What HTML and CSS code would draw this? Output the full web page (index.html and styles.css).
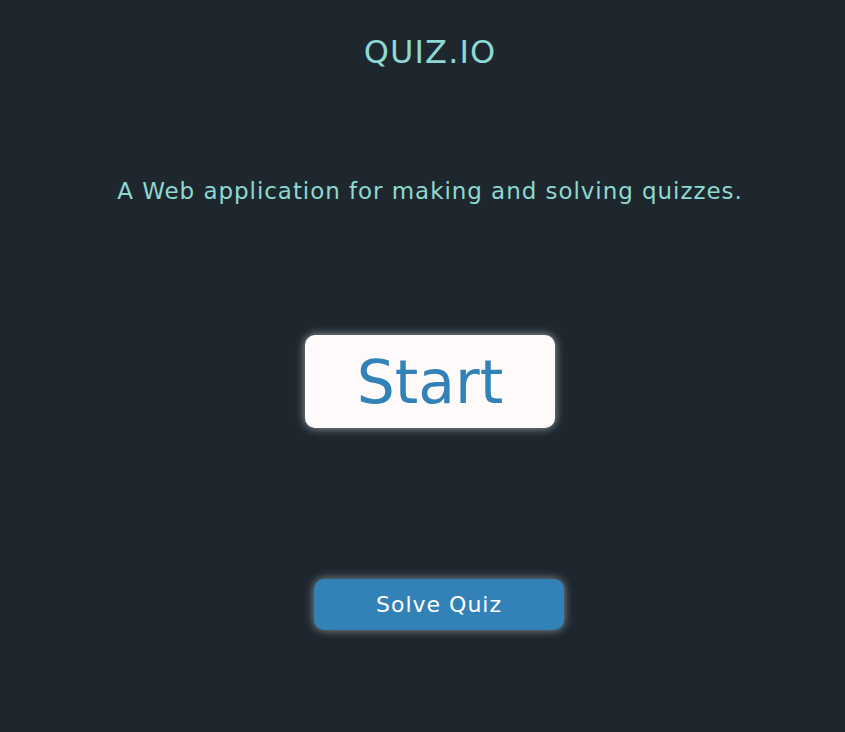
FILE: index.html
```html
<!DOCTYPE html>
<html lang="en">
<head>
<meta charset="utf-8">
<title>QUIZ.IO</title>
<link rel="stylesheet" href="styles.css">
</head>
<body>
<main class="page">
  <h1 class="title">QUIZ.IO</h1>
  <p class="subtitle">A Web application for making and solving quizzes.</p>
  <button class="start">Start</button>
  <button class="solve">Solve Quiz</button>
</main>
</body>
</html>
```
FILE: styles.css
```css
html, body {
  margin: 0;
  padding: 0;
  background: #1e272e;
  height: 100%;
}
.page {
  display: flex;
  flex-direction: column;
  align-items: center;
  padding-left: 15px;
  padding-top: 30px;
  font-family: "DejaVu Sans", "Open Sans", sans-serif;
  color: #8ed8d2;
}
.title {
  margin: 0;
  font-weight: 400;
  font-size: 32px;
  line-height: 44px;
  letter-spacing: 1.1px;
}
.subtitle {
  margin: 102px 0 0;
  font-size: 23px;
  line-height: 30px;
  letter-spacing: 0.95px;
}
button {
  font-family: inherit;
  border: none;
  border-radius: 10px;
  cursor: pointer;
}
.start {
  margin-top: 129px;
  width: 250px;
  height: 93px;
  background: #fffafa;
  color: #3282b8;
  font-size: 60px;
  box-shadow: 0 0 10px rgba(225, 232, 240, 0.65);
}
.solve {
  margin-top: 151px;
  margin-left: 18px;
  width: 250px;
  height: 51px;
  background: #3282b8;
  color: #ffffff;
  font-size: 22px;
  letter-spacing: 1px;
  box-shadow: 0 0 10px rgba(225, 232, 240, 0.55);
}
```
